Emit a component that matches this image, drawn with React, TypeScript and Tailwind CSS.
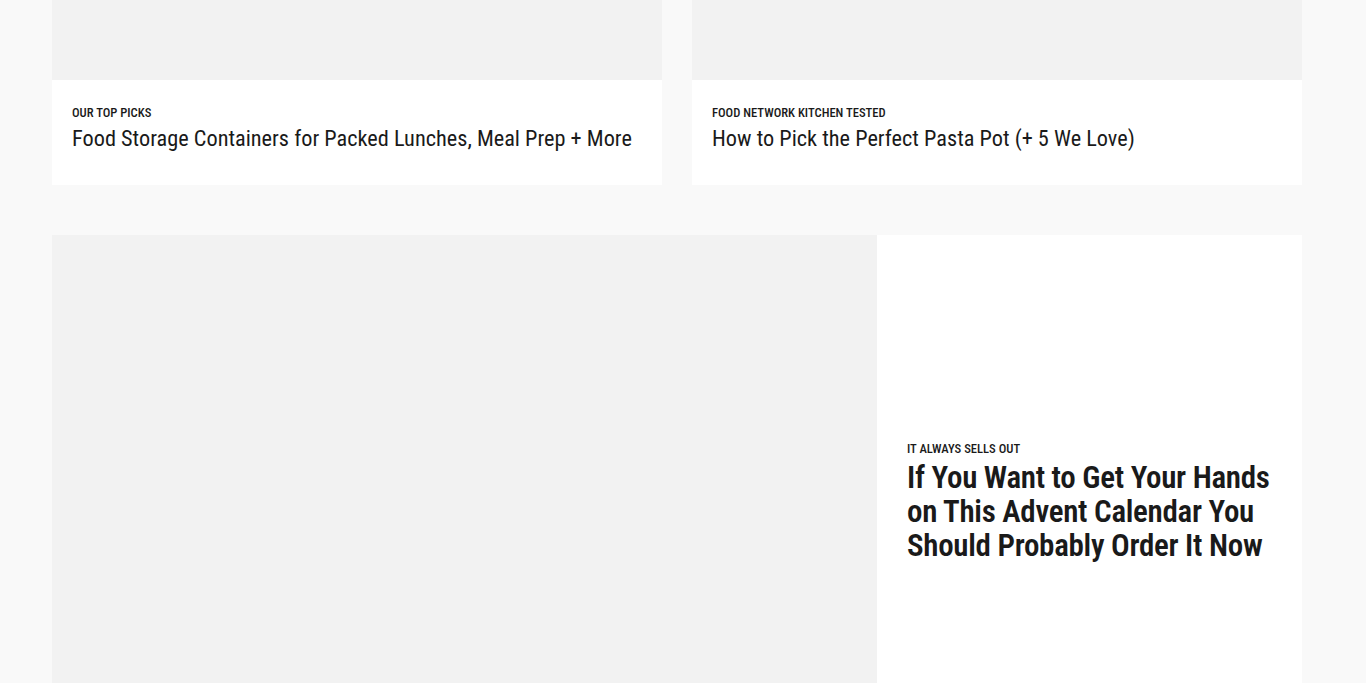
const font = "font-['Roboto_Condensed',Roboto,sans-serif]";

function SmallCard({ label, title }: { label: string; title: string }) {
  return (
    <div className="flex h-[185px] flex-col bg-white">
      <div className="h-[80px] bg-[#f2f2f2]" />
      <div className="flex flex-col px-5 pt-[25px]">
        <div className="text-[12.6px] leading-[16px] font-medium uppercase text-[#1a1a1a]">{label}</div>
        <div className="mt-[3px] text-[22.3px] leading-[28px] text-[#1a1a1a]">{title}</div>
      </div>
    </div>
  );
}

export default function App() {
  return (
    <div className={`h-[683px] overflow-hidden bg-[#f9f9f9] pl-[52px] pr-[64px] ${font}`}>
      <div className="grid grid-cols-2 gap-[30px]">
        <SmallCard label="Our Top Picks" title="Food Storage Containers for Packed Lunches, Meal Prep + More" />
        <SmallCard label="Food Network Kitchen Tested" title="How to Pick the Perfect Pasta Pot (+ 5 We Love)" />
      </div>
      <div className="mt-[50px] flex h-[536px]">
        <div className="w-[825px] bg-[#f2f2f2]" />
        <div className="flex flex-1 flex-col justify-center bg-white pb-[2px] pl-[30px] pr-[20px]">
          <div className="text-[12.6px] leading-[16px] font-medium uppercase text-[#1a1a1a]">It Always Sells Out</div>
          <div className="mt-[4px] text-[31px] leading-[34px] font-semibold tracking-[-0.3px] text-[#1a1a1a]">
            If You Want to Get Your Hands on This Advent Calendar You Should Probably Order It Now
          </div>
        </div>
      </div>
    </div>
  );
}
